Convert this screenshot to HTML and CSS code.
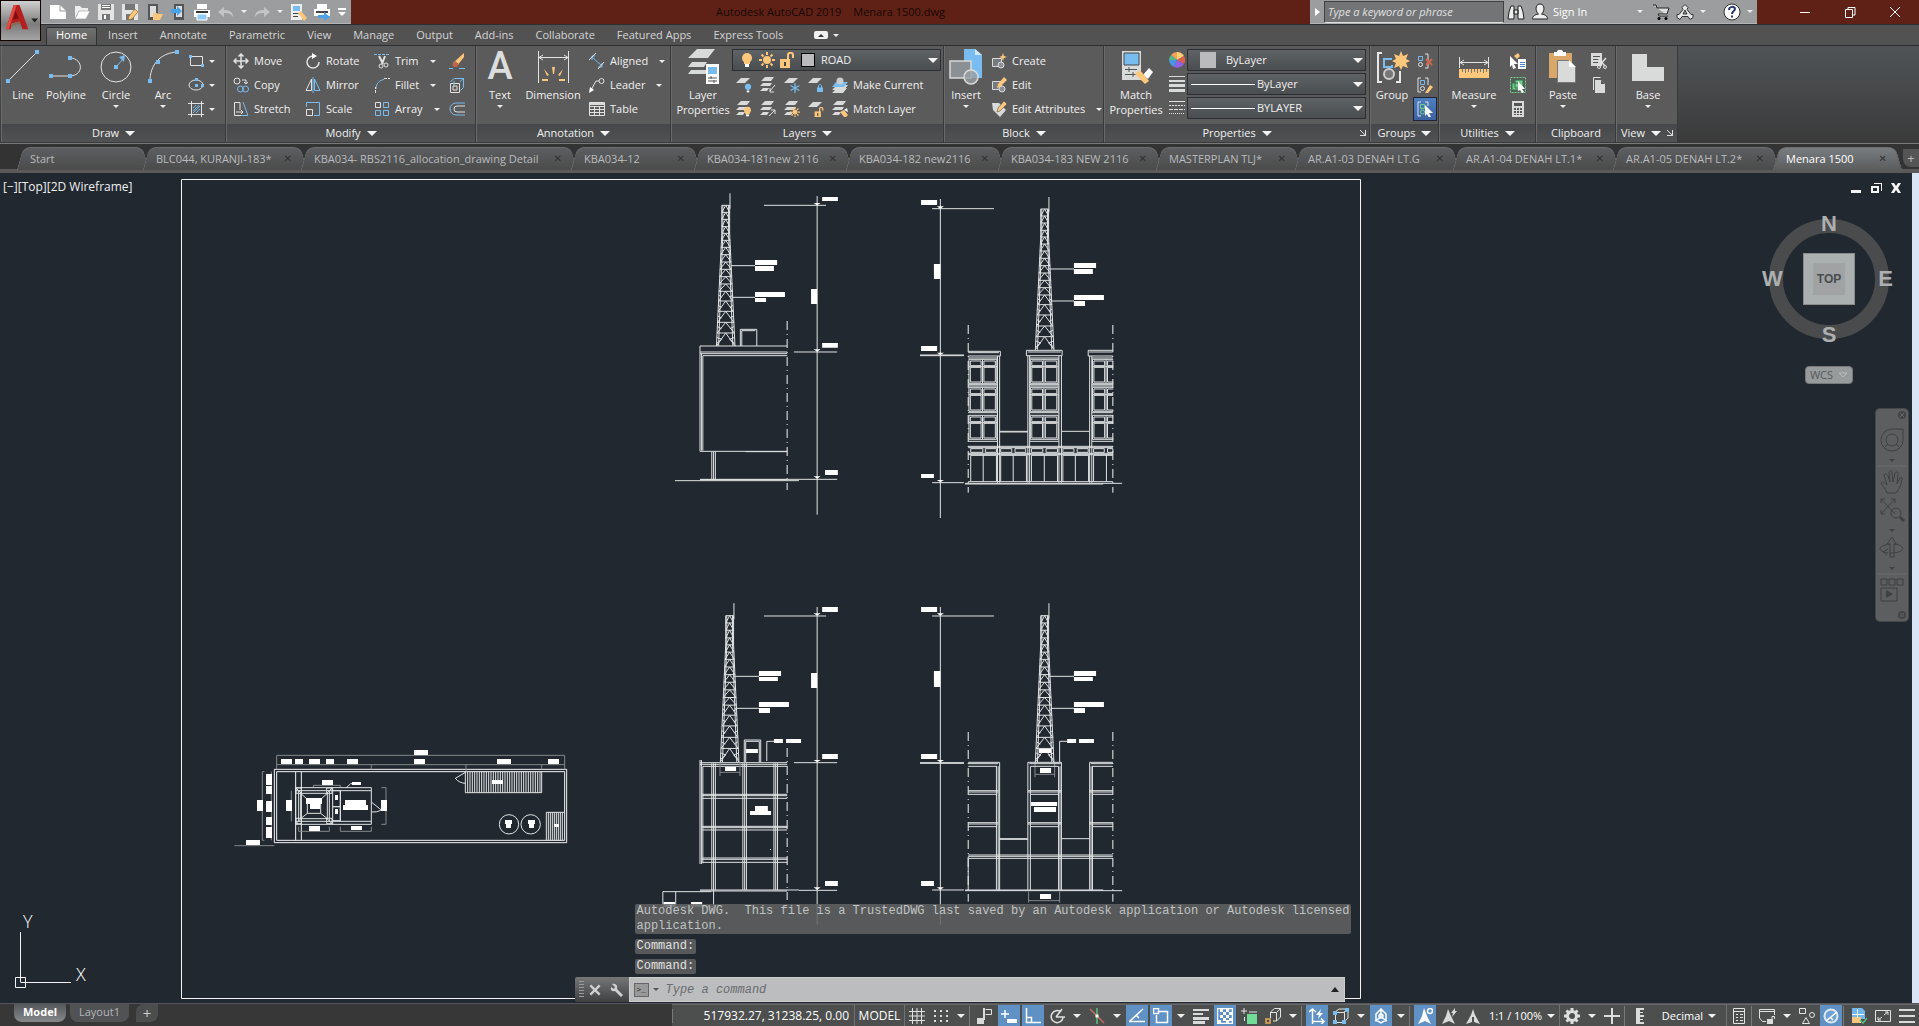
FILE: index.html
```html
<!DOCTYPE html>
<html lang="en">
<head>
<meta charset="utf-8">
<title>Autodesk AutoCAD 2019 - Menara 1500.dwg</title>
<link rel="stylesheet" href="styles.css">
</head>
<body>
<svg class="defs" aria-hidden="true">
  <defs>
    <!-- 16px icons: w = light stroke, b = blue stroke, fills use f-* -->
    <symbol id="new" viewBox="0 0 18 18"><path class="f-white" d="M1 2h10l6 6v8H1z"/><path d="M11 2v6h6" stroke="#999" fill="none"/></symbol>
    <symbol id="open" viewBox="0 0 18 18"><path d="M2 15V3h5l2 2h6v3H6z" fill="#eee"/><path class="f-white" d="M6 8h11l-4 8H2z" stroke="#999" stroke-width=".6"/></symbol>
    <symbol id="save" viewBox="0 0 18 18"><path fill="#e4e4e4" d="M1 1h16v16H1z"/><path fill="#777" d="M4 1h10v6H4zM5 11h8v6H5z"/><path fill="#fff" d="M5 2h8v1H5zM5 4h8v1H5zM7 12h2v4H7z"/></symbol>
    <symbol id="saveas" viewBox="0 0 18 18"><path fill="#e4e4e4" d="M1 1h16v16H1z"/><path fill="#777" d="M4 1h10v6H4zM5 11h8v6H5z"/><path fill="#fdc77b" d="M14 6l3 3-6 7-4 1 1-4z" stroke="#7a5a30" stroke-width=".6"/></symbol>
    <symbol id="openweb" viewBox="0 0 18 18"><path fill="#555" d="M3 1h10v16H3z"/><path fill="#ddd" d="M5 3h6v11H5z"/><path fill="#fdc77b" d="M8 10h4l1 1h5l-3 6H8z"/></symbol>
    <symbol id="saveweb" viewBox="0 0 18 18"><path fill="#555" d="M5 1h10v16H5z"/><path fill="#ddd" d="M7 3h6v11H7z"/><path fill="#4aa3e8" d="M2 6h6V3l5 5-5 5v-3H2z"/></symbol>
    <symbol id="plot" viewBox="0 0 18 18"><path class="f-white" d="M4 1h10v5H4zM1 7h16v7H1z"/><path fill="#333" d="M3 8h12v2H3z"/><path fill="#8ecbf5" d="M4 11h10v6H4z" stroke="#fff"/></symbol>
    <symbol id="undo" viewBox="0 0 18 18"><path fill="#c4c4c4" d="M1 9l6-5v3c6 0 9 2 9 7-2-3-4-4-9-4v4z"/></symbol>
    <symbol id="redo" viewBox="0 0 18 18"><path fill="#c4c4c4" d="M17 9l-6-5v3c-6 0-9 2-9 7 2-3 4-4 9-4v4z"/></symbol>
    <symbol id="matchprop" viewBox="0 0 18 18"><path fill="#eee" d="M2 1h11v16H2z"/><path fill="#79bdf0" d="M4 3h7v5H4z"/><path stroke="#444" d="M4 10.500h6M4 13.500h5"/><path fill="#fdc77b" d="M9 10l3-2 6 7-3 3z"/></symbol>
    <symbol id="batch" viewBox="0 0 18 18"><path class="f-white" d="M4 1h10v5H4zM1 6h16v7H1z"/><path fill="#444" d="M3 8h12v2H3z"/><path fill="#4aa3e8" d="M5 12h6V9l6 5-6 4v-3H5z"/></symbol>
    <symbol id="bino" viewBox="0 0 18 18"><path fill="#eee" stroke="#222" d="M2 9l2-6h3v13H1zM16 9l-2-6h-3v13h6zM7 7h4v4H7z"/></symbol>
    <symbol id="person" viewBox="0 0 18 18"><path fill="#eee" stroke="#222" d="M9 1c6 0 4 9 1.500 10 5 1 6 3 6 5h-15c0-2 1-4 6-5C5 10 3 1 9 1z"/></symbol>
    <symbol id="cart" viewBox="0 0 18 18"><path fill="#ddd" stroke="#222" d="M1 2h3l1 3h12l-2 6H6l1 2h9"/><circle cx="7" cy="15.500" r="1.500"/><circle cx="14" cy="15.500" r="1.500"/></symbol>
    <symbol id="a360" viewBox="0 0 18 18"><path fill="#e8e8e8" stroke="#333" d="M9 1.500l3 3-1 2 4 5h2v3l-3 2-2-3H6l-2 3-3-2v-3h2l4-5-1-2zM9 7l-2 4h4z"/></symbol>
    <symbol id="help" viewBox="0 0 18 18"><circle cx="9" cy="9" r="8" fill="#fff" stroke="#333"/><path d="M6 7c0-4 6-4 6-1 0 2-3 2-3 5M9 12.500v2" fill="none" stroke="#24386c" stroke-width="2"/></symbol>

    <symbol id="line" viewBox="0 0 36 36"><path class="w" d="M3 32L32 3"/><path class="f-blue" d="M1 30h4v4H1zM30 1h4v4h-4z"/></symbol>
    <symbol id="polyline" viewBox="0 0 36 36"><path class="w" d="M4 27h17c16 0 14-18 1-18"/><path class="f-blue" d="M1 25h4v4H1zM20 25h4v4h-4zM20 7h4v4h-4z"/></symbol>
    <symbol id="circle" viewBox="0 0 36 36"><circle class="w" cx="18" cy="18" r="15"/><path class="b" d="M18 18l7-8"/><path class="f-blue" d="M16 16h4v4h-4zM27 6l-1 7-5-5z"/></symbol>
    <symbol id="arc" viewBox="0 0 36 36"><path class="w" d="M5 32C5 16 15 4 32 3"/><path class="f-blue" d="M3 30h4v4H3zM11 11h4v4h-4zM30 1h4v4h-4z"/></symbol>
    <symbol id="rect" viewBox="0 0 16 16"><path class="w" d="M2.500 3.500h12v9h-12z"/><path class="f-blue" d="M1 2h3v3H1zM13 11h3v3h-3z"/></symbol>
    <symbol id="ellipse" viewBox="0 0 16 16"><ellipse class="w" cx="8" cy="8" rx="7" ry="5"/><path class="f-blue" d="M7 7h3v3H7zM7 1h3v3H7zM13 7h3v3h-3z"/></symbol>
    <symbol id="hatch" viewBox="0 0 16 16"><path class="w" d="M3.500 0v16M13.500 0v16M0 2.500h16M0 13.500h16"/><path class="b" d="M5 7l3-3M5 10l6-6M5 12l7-7M8 12l4-4"/></symbol>
    <symbol id="move" viewBox="0 0 16 16"><path class="w" stroke-width="1.500" d="M8 1v14M1 8h14M5.500 3.500L8 1l2.500 2.500M5.500 12.500L8 15l2.500-2.500M3.500 5.500L1 8l2.500 2.500M12.500 5.500L15 8l-2.500 2.500"/></symbol>
    <symbol id="rotate" viewBox="0 0 16 16"><path class="w" stroke-width="1.500" d="M8 3a6 6 0 1 0 6 6"/><path class="f-white" d="M7 0l5 3-5 3z"/></symbol>
    <symbol id="trim" viewBox="0 0 16 16"><path class="b" stroke-dasharray="3 1" d="M0 1.500h15"/><path class="w" stroke-width="2" d="M5 3l4 8M11 3L8 11"/><circle class="w" cx="7" cy="13" r="2"/><circle class="w" cx="12" cy="12" r="2"/></symbol>
    <symbol id="copy" viewBox="0 0 16 16"><circle class="w" cx="4" cy="4" r="3"/><path class="w" d="M9 3h4v4M11 5l2 2 2-2"/><circle class="b" cx="7.500" cy="12" r="3"/><circle class="b" cx="12.500" cy="12" r="3"/></symbol>
    <symbol id="mirror" viewBox="0 0 16 16"><path class="w" d="M6.500 2v11.500H1z"/><path class="b" d="M9.500 2v11.500H15zM8 0v16"/></symbol>
    <symbol id="fillet" viewBox="0 0 16 16"><path class="b" d="M2 12C2 6 6 3 10 2.500"/><path class="w" stroke-dasharray="3 1" d="M10 1.500h6M1.500 16v-6"/></symbol>
    <symbol id="stretch" viewBox="0 0 16 16"><path class="w" d="M8 14.500H1.500V1.500H7V9"/><path class="b" d="M10 1l5 13.500H8"/><path class="w" d="M3 11h7M8 9l2 2-2 2"/></symbol>
    <symbol id="scale" viewBox="0 0 16 16"><path class="b" d="M1.500 6V1.500h13v13H9"/><path class="w" d="M1.500 8.500h6v6h-6z"/></symbol>
    <symbol id="array" viewBox="0 0 16 16"><path class="w" d="M1.500 1.500h5v5h-5z"/><path class="b" d="M9.500 1.500h5v5h-5zM1.500 9.500h5v5h-5zM9.500 9.500h5v5h-5z"/></symbol>
    <symbol id="erase" viewBox="0 0 16 16"><path class="f-gold" d="M15 0v4L8 13l-4-3z"/><path fill="#c0644a" d="M6 8l4 3-2 3H5l-2-2z"/><path class="b" d="M0 15.500h4M10 15.500h6"/></symbol>
    <symbol id="explode" viewBox="0 0 16 16"><path class="w" d="M1.500 6.500h9v9h-9z"/><path class="b" d="M1.500 4.500l4-3h9v9l-3 3M11 4.500l3.500-3M5 9V4"/><path class="w" d="M4 9h4v4H4z"/></symbol>
    <symbol id="offset" viewBox="0 0 16 16"><path class="b" d="M16 2H7a6 6 0 0 0 0 12h9"/><path class="w" d="M16 5H8a3 3 0 0 0 0 6h8"/></symbol>
    <symbol id="dim" viewBox="0 0 36 36"><path class="w" d="M3.500 2v32M33.500 2v32M4 8.500h29M8 6L4 8.500 8 11M29 6l4 2.500-4 2.500"/><path class="f-gold" d="M17 18h3l-1 7h-1zM9 20l5 6-2 1zM28 20l-5 6 2 1zM7 30h6v2H7zM24 30h6v2h-6z"/></symbol>
    <symbol id="aligned" viewBox="0 0 16 16"><path class="b" d="M3 4l10 9M3 7V3h3M13 10v4h-4"/><path class="w" d="M0 7l7-7M9 16l6-7"/></symbol>
    <symbol id="leader" viewBox="0 0 16 16"><circle class="w" cx="12.500" cy="4" r="2.500"/><path class="w" d="M10 4H7l-5 9"/><path class="f-white" d="M0 16l1-6 4 3z"/></symbol>
    <symbol id="table" viewBox="0 0 16 16"><path class="w" d="M.5 1.500h15v13H.5zM1 5.500h15M1 8.500h15M1 11.500h15M5.500 5v10M10.500 5v10"/><path class="f-grey" d="M1 2h14v2H1z"/></symbol>
    <symbol id="layers36" viewBox="0 0 36 36"><path class="f-grey" d="M12 0h18l-7 9H3zM3 13h19l-3 5H3l4-5zM3 21h18v4H3l3-4z"/><path class="f-white" d="M21 15h13v20H21z"/><path class="f-blue" d="M23 18h9v7h-9z"/><path d="M23 29h9M23 32h9M26 27v3M29 31v3" stroke="#555"/></symbol>
    <symbol id="lay" viewBox="0 0 16 16"><path class="f-grey" d="M5 1h9L9 6H0z"/></symbol>
    <symbol id="lays" viewBox="0 0 16 16"><path class="f-grey" d="M5 0h9l-3 4H1zM3 6h9l-2 3H0zM3 11h6l-2 3H0z"/></symbol>
    <symbol id="bulb" viewBox="0 0 16 16"><circle class="f-gold" cx="8" cy="6" r="5"/><path class="f-gold" d="M5 9h6v3H5z"/><path class="f-white" d="M6 12h4v3H6z"/></symbol>
    <symbol id="sun" viewBox="0 0 16 16"><circle class="f-gold" cx="8" cy="8" r="4"/><path stroke="#fdc77b" stroke-width="2" d="M8 0v3M8 13v3M0 8h3M13 8h3M2.500 2.500l2 2M11.500 11.500l2 2M2.500 13.500l2-2M11.500 4.500l2-2"/></symbol>
    <symbol id="unlock" viewBox="0 0 16 16"><path class="f-gold" d="M1 7h10v9H1z"/><path fill="none" stroke="#fdc77b" stroke-width="2" d="M9 8V3c0-3 5-3 5 0v3"/><path fill="#444" d="M5 10h2v4H5z"/></symbol>
    <symbol id="lock" viewBox="0 0 16 16"><path class="f-blue" d="M2 7h12v9H2z"/><path fill="none" stroke="#79bdf0" stroke-width="2" d="M5 8V4c0-4 6-4 6 0v4"/></symbol>
    <symbol id="flake" viewBox="0 0 16 16"><path stroke="#79bdf0" stroke-width="2" d="M8 0v16M1 4l14 8M15 4L1 12"/></symbol>
    <symbol id="bluebulb" viewBox="0 0 16 16"><circle class="f-blue" cx="8" cy="6" r="5"/><path class="f-white" d="M6 12h4v3H6z"/></symbol>
    <symbol id="l-off" viewBox="0 0 16 16"><use href="#lay"/><use href="#bluebulb" x="7" y="6" width="10" height="10"/></symbol>
    <symbol id="l-iso" viewBox="0 0 16 16"><use href="#lays"/><path class="w" d="M15 8l-5 6M10 11v4h4"/></symbol>
    <symbol id="l-frz" viewBox="0 0 16 16"><use href="#lay"/><use href="#flake" x="6" y="6" width="10" height="10"/></symbol>
    <symbol id="l-lck" viewBox="0 0 16 16"><use href="#lay"/><use href="#lock" x="8" y="6" width="8" height="10"/></symbol>
    <symbol id="l-cur" viewBox="0 0 16 16"><path class="f-grey" d="M5 8h11l-4 5H0zM5 11h10l-4 5H0z"/><path class="f-blue" d="M4 5h12l-4 5H0z"/><circle fill="#ccc" cx="8" cy="4" r="3.500"/></symbol>
    <symbol id="l-on" viewBox="0 0 16 16"><use href="#lays"/><use href="#bulb" x="6" y="5" width="11" height="11"/></symbol>
    <symbol id="l-uni" viewBox="0 0 16 16"><use href="#lays"/><path class="w" d="M9 15l6-6M11 9h4v4"/></symbol>
    <symbol id="l-thw" viewBox="0 0 16 16"><use href="#lays"/><use href="#sun" x="6" y="6" width="10" height="10"/></symbol>
    <symbol id="l-unl" viewBox="0 0 16 16"><use href="#lay"/><use href="#unlock" x="6" y="6" width="10" height="10"/></symbol>
    <symbol id="l-mat" viewBox="0 0 16 16"><use href="#lays"/><path class="f-gold" d="M8 11l4-2 4 5-3 3z"/><path class="f-white" d="M12 9l3-2 1 4z"/></symbol>
    <symbol id="insert36" viewBox="0 0 36 36"><path class="f-blue" d="M16 0h11l7 6v23H16z"/><path fill="#cfe8fa" d="M27 0v6h7z"/><path d="M2 12h21v17H2z" fill="#8b9094" stroke="#d8dada" stroke-width="1.500"/><circle cx="23" cy="28" r="7" fill="#99a0a4" fill-opacity=".8" stroke="#d8dada" stroke-width="1.500"/></symbol>
    <symbol id="create" viewBox="0 0 16 16"><path fill="#777b7e" stroke="#d8dada" d="M1.500 5.500h9v8h-9z"/><circle cx="10" cy="12" r="3" fill="#8b9094" stroke="#d8dada"/><path class="f-gold" d="M12 0l1 3 3 1-3 1-1 3-1-3-3-1 3-1z"/></symbol>
    <symbol id="edit" viewBox="0 0 16 16"><path fill="#777b7e" stroke="#d8dada" d="M1.500 4.500h9v8h-9z"/><circle cx="11" cy="12" r="3" fill="#8b9094" stroke="#d8dada"/><path class="f-gold" d="M13 0l3 3-7 7-3 1 1-4z"/></symbol>
    <symbol id="editattr" viewBox="0 0 16 16"><path class="f-grey" d="M1 2h7l7 7-6 7-7-7z"/><path class="f-gold" d="M13 0l3 3-7 7-3 1 1-4z" stroke="#555" stroke-width=".6"/></symbol>
    <symbol id="match36" viewBox="0 0 36 36"><path class="f-grey" d="M4 2h19v29H4z"/><path class="f-blue" d="M6 4h15v12H6z" stroke="#444"/><path d="M7 20.500h12M7 25.500h12M11 18v5M15 23v5" stroke="#555"/><path class="f-white" d="M25 26l6-7 4 4-5 7z"/><path class="f-gold" d="M17 25l5-4 9 11-4 3z"/></symbol>
    <symbol id="wheel" viewBox="0 0 16 16"><path fill="#f2a25c" d="M8 8L2 3a8 8 0 0 1 6-3z"/><path fill="#f9cf72" d="M8 8V0a8 8 0 0 1 7 4z"/><path fill="#d9604a" d="M8 8l7-4a8 8 0 0 1 0 8z"/><path fill="#9460e8" d="M8 8l7 4a8 8 0 0 1-10 3z"/><path fill="#4a94e0" d="M8 8l-3 7a8 8 0 0 1-5-7z"/><path fill="#53b98b" d="M8 8H0a8 8 0 0 1 2-5z"/></symbol>
    <symbol id="lweight" viewBox="0 0 16 16"><path class="f-grey" d="M0 0h16v1H0zM0 4h16v2H0zM0 8h16v3H0zM0 13h16v3H0z"/></symbol>
    <symbol id="ltype" viewBox="0 0 16 16"><path class="w" d="M0 1.500h16"/><path class="w" stroke-dasharray="2 1" d="M0 5.500h16"/><path class="w" stroke-dasharray="4 1" d="M0 9.500h16"/><path class="w" stroke-dasharray="1 1" d="M0 13.500h16"/></symbol>
    <symbol id="group36" viewBox="0 0 36 36"><path fill="none" stroke="#e8e8e8" stroke-width="2" d="M8 4H4v29h4M22 33h4V22"/><path fill="none" stroke="#79bdf0" stroke-width="2" d="M18 10H10v8h8v-2"/><circle cx="15" cy="25" r="5" fill="#777" stroke="#ccc" stroke-width="2"/><path class="f-gold" d="M27 2l2 5 5-2-2 5 4 2-4 2 2 5-5-2-2 4-2-4-5 2 2-5-4-2 4-2-2-5 5 2z"/></symbol>
    <symbol id="ungroup" viewBox="0 0 16 16"><path class="w" d="M8 1h3v14H8"/><path class="b" d="M1.500 3.500h4v4h-4z"/><circle class="w" cx="3.500" cy="11.500" r="2"/><path stroke="#d0674c" stroke-width="2" d="M9 6l6 6M15 6l-6 6"/></symbol>
    <symbol id="groupedit" viewBox="0 0 16 16"><path class="w" d="M4 1H1v14h3M8 1h3v7"/><path class="b" d="M3.500 3.500h4v4h-4z"/><circle class="w" cx="5.500" cy="11.500" r="2"/><path class="f-gold" d="M13 8l3 2-5 6H8z"/></symbol>
    <symbol id="groupsel" viewBox="0 0 16 16"><path class="w" d="M4 1H1v14h3M8 1h3v4"/><path fill="none" stroke="#6fd08c" d="M3.500 3.500h4v4h-4z"/><circle cx="5.500" cy="11" r="2" fill="none" stroke="#6fd08c"/><path class="f-white" d="M8 4l8 8h-4l2 4-2 1-2-4-2 2z"/></symbol>
    <symbol id="measure36" viewBox="0 0 36 36"><path class="w" d="M3.500 8v11M32.500 8v11M4 13.500h28M8 11l-4 2.500L8 16M28 11l4 2.500L28 16"/><path class="f-gold" d="M3 20h30v9H3z"/><path stroke="#777" d="M6.500 20v3M9.500 20v4M12.500 20v3M15.500 20v4M18.500 20v3M21.500 20v4M24.500 20v3M27.500 20v4M30.500 20v3"/></symbol>
    <symbol id="qsel" viewBox="0 0 16 16"><path class="f-white" d="M0 3l8 8H4l2 4-3 1-1-4-2 2zM8 6h8v10H8z"/><path class="f-gold" d="M8 0l2 3-3 3-3-3z"/><path stroke="#4a86c8" d="M10 9.500h5M10 11.500h5M10 13.500h5"/></symbol>
    <symbol id="selall" viewBox="0 0 16 16"><path fill="none" stroke="#6fd08c" stroke-dasharray="2 1" d="M.5.5h15v15H.5z"/><path fill="#6fd08c" d="M5 3h8v8H5zM2 6h8v7H2z" stroke="#3f6b4c"/><path class="f-white" d="M8 4l7 8h-3l2 3-2 1-2-3-2 1z"/></symbol>
    <symbol id="calc" viewBox="0 0 16 16"><path class="f-grey" d="M2 0h12v16H2z"/><path fill="#555" d="M4 2h8v3H4zM4 7h2v2H4zM7 7h2v2H7zM10 7h2v2h-2zM4 10h2v2H4zM7 10h2v2H7zM10 10h2v2h-2zM4 13h2v1H4zM7 13h2v1H7zM10 13h2v1h-2z"/></symbol>
    <symbol id="paste36" viewBox="0 0 36 36"><path fill="#dba669" d="M4 4h23v25H4z"/><path class="f-white" d="M9 7h12V3h-3c0-3-6-3-6 0H9z"/><path class="f-grey" stroke="#777" d="M12.500 11.500h11l7 7v15h-18z"/><path fill="#fff" d="M24 11v7h7z"/></symbol>
    <symbol id="cut" viewBox="0 0 16 16"><path class="f-grey" d="M0 0h11v13H0z"/><path stroke="#555" d="M2 3.500h7M2 6.500h7M2 9.500h5"/><path class="w" stroke-width="1.500" d="M7 5l7 8M15 5l-7 8"/><circle class="w" cx="8" cy="14" r="1.500"/><circle class="w" cx="14" cy="14" r="1.500"/></symbol>
    <symbol id="copyclip" viewBox="0 0 16 16"><path class="w" d="M2.500 13V.5h7"/><path class="f-grey" d="M4 3h6l4 4v9H4z"/><path fill="#555" d="M10 3v4h4z"/></symbol>
    <symbol id="base36" viewBox="0 0 36 36"><path class="f-grey" d="M2 5h15v13h17v14H2z"/></symbol>

    <symbol id="s-grid" viewBox="0 0 16 16"><path class="w" d="M3.500 0v16M8 0v16M12.500 0v16M0 3.500h16M0 8h16M0 12.500h16"/></symbol>
    <symbol id="s-snap" viewBox="0 0 16 16"><path stroke="#ddd" stroke-width="2" stroke-dasharray="2 4" d="M1 3h14M1 8h14M1 13h14"/></symbol>
    <symbol id="s-infer" viewBox="0 0 16 16"><path class="f-grey" d="M0 10h7v6H0zM6 0h2v12H6z"/><path class="w" d="M8.500 1.500h6v5h-6"/></symbol>
    <symbol id="s-dyn" viewBox="0 0 16 16"><path stroke="#fff" stroke-width="1.500" d="M4 2v8M0 6h8"/><path class="f-white" d="M6 11h10v4H6z"/></symbol>
    <symbol id="s-ortho" viewBox="0 0 16 16"><path class="ww" d="M1.500 0v14.500H16M2 9.500h4.500V14"/></symbol>
    <symbol id="s-polar" viewBox="0 0 16 16"><path class="w" stroke-width="1.500" d="M12 4a6 6 0 1 0 2 6M7 9h9M7 9l6-8"/></symbol>
    <symbol id="s-iso" viewBox="0 0 16 16"><path stroke="#59c07a" stroke-width="1.500" d="M8 0v16"/><path stroke="#c07060" stroke-width="1.500" d="M1 1l14 14"/><path class="f-white" d="M6.500 6.500h3v3h-3z"/></symbol>
    <symbol id="s-otrack" viewBox="0 0 16 16"><path class="ww" d="M0 13.500h16M1 13L14 1M7 7l3 3"/></symbol>
    <symbol id="s-osnap" viewBox="0 0 16 16"><path class="ww" d="M6 3.500h8.500v11H3.500V7M.5.5h5v5h-5z"/></symbol>
    <symbol id="s-lwt" viewBox="0 0 16 16"><path class="f-grey" d="M0 1h16v2H0zM0 5h10v2H0zM0 9h16v3H0zM0 13h12v3H0z"/></symbol>
    <symbol id="s-trans" viewBox="0 0 16 16"><path class="ww" d="M.5.5h15v15H.5z"/><path class="f-white" d="M3 1h3v3H3zM9 1h3v3H9zM6 4h3v3H6zM12 4h3v3h-3zM3 7h3v3H3zM9 7h3v3H9zM6 10h3v3H6zM12 10h3v3h-3zM1 12h3v3H1zM9 12h3v3H9z"/></symbol>
    <symbol id="s-cycle" viewBox="0 0 16 16"><path class="w" d="M3 0v6M0 3h6M3.500 9V13M8 4h8"/><path fill="#71dc95" d="M6 6h10v10H6z"/></symbol>
    <symbol id="s-cube" viewBox="0 0 16 16"><path class="w" d="M5.500 10V4l4-3.500h6V9l-4 4H8M5.500 4.500h6V13M11.500 4.500l4-4"/><path fill="none" stroke="#e8a85c" stroke-width="1.500" d="M1 11h4v4H1z"/></symbol>
    <symbol id="s-ucs" viewBox="0 0 16 16"><path class="ww" d="M3.500 16V1M0 4l3.500-3L7 4M3 13.500h12M12 10.500l3 3-3 3"/><path class="f-white" d="M12 1L7 7h3l-1 4 5-6h-3z"/></symbol>
    <symbol id="s-filt" viewBox="0 0 16 16"><path class="w" d="M2.500 4.500h9v10h-9zM2 4l4-3h9v9l-4 4M11 4l4-3"/><path class="f-blue" d="M0 3h4v4H0zM0 12h4v4H0zM9 12h4v4H9zM12 0h4v4h-4z"/></symbol>
    <symbol id="s-gizmo" viewBox="0 0 16 16"><path class="ww" d="M8 1l5 5v6l-5 3-5-3V6zM8 1v8M8 9l-6 4M8 9l6 4"/><circle class="ww" cx="8" cy="8" r="2"/></symbol>
    <symbol id="s-anno" viewBox="0 0 16 16"><path class="f-white" d="M7 0l3 8 4 8-6-3-7 3 4-8z"/><circle class="ww" cx="13" cy="3" r="2.500"/></symbol>
    <symbol id="s-auto" viewBox="0 0 16 16"><path class="f-grey" d="M7 1l3 7 4 8-6-3-7 3 4-8zM14 0l-4 5h2l-1 4 5-6h-2z"/></symbol>
    <symbol id="s-scale" viewBox="0 0 16 16"><path class="f-grey" d="M8 1l2 6 5 9-6-2V9H7v5l-6 2 5-9z"/></symbol>
    <symbol id="s-gear" viewBox="0 0 16 16"><circle cx="8" cy="8" r="4.500" fill="none" stroke="#ddd" stroke-width="3"/><path stroke="#ddd" stroke-width="3" d="M8 0v3M8 13v3M0 8h3M13 8h3M2.500 2.500l2 2M11.500 11.500l2 2M2.500 13.500l2-2M11.500 4.500l2-2"/></symbol>
    <symbol id="s-plus" viewBox="0 0 16 16"><path stroke="#ddd" stroke-width="2" d="M8 0v16M0 8h16"/></symbol>
    <symbol id="s-ruler" viewBox="0 0 16 16"><path class="f-grey" d="M4 0h8v2H8v2h3v1H8v2h4v2H8v2h3v1H8v2h4v2H4z"/></symbol>
    <symbol id="s-quick" viewBox="0 0 16 16"><path class="w" d="M2.500.5h11v15h-11zM3 3.500h10M5 6.500h2M9 6.500h3M5 9.500h2M9 9.500h3M5 12.500h2M9 12.500h3"/></symbol>
    <symbol id="s-lockui" viewBox="0 0 16 16"><path class="w" d="M7 13.500H3.500L.5 10V1.500h15V7M.5 3.500h15"/><path class="f-grey" d="M8 11h6v5H8z"/><path class="w" d="M13 11V8.500h2.500V11"/></symbol>
    <symbol id="s-isol" viewBox="0 0 16 16"><path class="w" d="M.5.500h6v5h-6zM7 9.500l3.500 6h-7z"/><circle class="w" cx="13" cy="7" r="2.500"/></symbol>
    <symbol id="s-hw" viewBox="0 0 16 16"><circle cx="8" cy="8" r="7.500" fill="#dfe8f0"/><circle cx="8" cy="8" r="5.500" fill="#6da2d4"/><path stroke="#fff" stroke-width="1.500" d="M3 13L14 4M7 9l3 3"/></symbol>
    <symbol id="s-cad" viewBox="0 0 16 16"><path fill="#6fb8f0" d="M1 0h10l3 3v8H1z"/><path fill="#f5c77e" d="M1 9h9v6H1z"/><path stroke="#fff" d="M1 6.500h12M6.500 1v9"/><path fill="none" stroke="#59c07a" stroke-width="1.500" d="M9 12l3 3 4-5"/></symbol>
    <symbol id="s-full" viewBox="0 0 16 16"><path class="w" d="M.5 2.500h15v11H.5zM9 7l4-3M10 4h3v3M7 9l-4 3M3 9v3h3"/></symbol>
    <symbol id="s-menu" viewBox="0 0 16 16"><path class="f-grey" d="M0 1h16v2H0zM0 7h16v2H0zM0 13h16v2H0z"/></symbol>

    <!-- Lattice tower, centred on x = 0, in drawing units -->
    <g id="tower">
      <path d="M-11 76V160L-26 498M11 76V160L26 498M-8 76V160L-20 498M8 76V160L20 498M-11 76H11M12 40V86"/>
      <path d="M-11 97L0 76L11 97ZM-11 118L0 97L11 118ZM-11 140L0 118L11 140ZM-11 160L0 140L11 160ZM-12 181L0 160L12 181ZM-13 202L0 181L13 202ZM-14 224L0 202L14 224ZM-15 246L0 224L15 246ZM-16 268L0 246L16 268ZM-17 290L0 268L17 290ZM-18 312L0 290L18 312ZM-19 334L0 312L19 334ZM-20 363L0 334L20 363ZM-21 394L0 363L21 394ZM-23 427L0 394L23 427ZM-24 459L0 427L24 459ZM-26 498L0 459L26 498"/>
      <path d="M-20 345l8 6M20 345l-8 6M-21 376l9 6M21 376l-9 6M-22 408l10 6M22 408l-10 6M-23 440l11 6M23 440l-11 6M-25 472l14 6-14 12M25 472l-14 6 14 12"/>
    </g>
    <g id="win"><path d="M0 0H78V72H0ZM4 5H34V19H4ZM42 5H74V19H42ZM4 24H34V68H4ZM42 24H74V68H42ZM38 0V72M0 22H78"/></g>
    <g id="winhalf"><path d="M58 0H0V72H58M4 5H34V19H4ZM58 5H42V19H58M4 24H34V68H4ZM58 24H42V68H58M38 0V72M0 22H58"/></g>
    <g id="mark"><path class="solid" d="M-10 -7H10L0 0Z"/></g>
  </defs>
</svg>

<div class="app">
<header class="titlebar">
  <button class="app-menu" aria-label="Application menu">
    <svg viewBox="0 0 40 40"><path fill="#b3201f" d="M5 29L13 4h6l9 25h-6l-3-8-8 2-1 6z"/><path fill="#e44a42" d="M13 4h3L8 29H5z"/><path fill="#7d0f12" d="M15 10l-3 9 6-1z"/><path fill="#8a6a50" d="M11 23l8-2 1 2-10 3z"/><path fill="#222" d="M31 18h7l-3.500 4z"/></svg>
  </button>
  <div class="qat">
    <button aria-label="New"><svg><use href="#new"/></svg></button>
    <button aria-label="Open"><svg><use href="#open"/></svg></button>
    <button aria-label="Save"><svg><use href="#save"/></svg></button>
    <button aria-label="Save As"><svg><use href="#saveas"/></svg></button>
    <button aria-label="Open from Web"><svg><use href="#openweb"/></svg></button>
    <button aria-label="Save to Web"><svg><use href="#saveweb"/></svg></button>
    <button aria-label="Plot"><svg><use href="#plot"/></svg></button>
    <button aria-label="Undo"><svg><use href="#undo"/></svg></button>
    <button class="arrow" aria-label="Undo list"></button>
    <button aria-label="Redo"><svg><use href="#redo"/></svg></button>
    <button class="arrow" aria-label="Redo list"></button>
    <button aria-label="Match"><svg><use href="#matchprop"/></svg></button>
    <button aria-label="Batch plot"><svg><use href="#batch"/></svg></button>
    <button class="over" aria-label="Customize"></button>
  </div>
  <h1 class="title"><span>Autodesk AutoCAD 2019</span><span>Menara 1500.dwg</span></h1>
  <div class="infobar">
    <button class="right-arrow" aria-label="Collapse search"></button>
    <input type="text" placeholder="Type a keyword or phrase" aria-label="Search">
    <button class="ib" aria-label="Find"><svg><use href="#bino"/></svg></button>
    <button class="signin"><svg><use href="#person"/></svg>Sign In</button>
    <button class="arrow" aria-label="Account list"></button>
    <button class="ib cart" aria-label="Store"><svg><use href="#cart"/></svg></button>
    <button class="ib" aria-label="App manager"><svg><use href="#a360"/></svg></button>
    <button class="arrow" aria-label="App list"></button>
    <button class="ib help" aria-label="Help"><svg><use href="#help"/></svg></button>
    <button class="arrow" aria-label="Help list"></button>
  </div>
  <div class="winbtns">
    <button aria-label="Minimize"><svg viewBox="0 0 12 12"><path d="M1 6.500h10"/></svg></button>
    <button aria-label="Restore"><svg viewBox="0 0 12 12"><path d="M1.500 3.500h7v8h-7zM4 3V1.500h7V9H9"/></svg></button>
    <button aria-label="Close"><svg viewBox="0 0 12 12"><path d="M1 1l10 10M11 1L1 11"/></svg></button>
  </div>
</header>

<nav class="ribbon-tabs">
  <a href="#" class="active">Home</a><a href="#">Insert</a><a href="#">Annotate</a><a href="#">Parametric</a><a href="#">View</a><a href="#">Manage</a><a href="#">Output</a><a href="#">Add-ins</a><a href="#">Collaborate</a><a href="#">Featured Apps</a><a href="#">Express Tools</a>
  <button class="min-ribbon" aria-label="Minimize ribbon"></button><button class="arrow" aria-label="Ribbon options"></button>
</nav>

<section class="ribbon">
  <div class="panel p-draw">
    <div class="body">
      <button class="big w38"><svg><use href="#line"/></svg>Line</button>
      <button class="big w48"><svg><use href="#polyline"/></svg>Polyline</button>
      <button class="big w52"><svg><use href="#circle"/></svg>Circle<i class="dn"></i></button>
      <button class="big w42"><svg><use href="#arc"/></svg>Arc<i class="dn"></i></button>
      <div class="col">
        <button aria-label="Rectangle"><svg><use href="#rect"/></svg><i class="dn"></i></button>
        <button aria-label="Ellipse"><svg><use href="#ellipse"/></svg><i class="dn"></i></button>
        <button aria-label="Hatch"><svg><use href="#hatch"/></svg><i class="dn"></i></button>
      </div>
    </div>
    <div class="ptitle">Draw<i class="tri"></i></div>
  </div>
  <div class="panel p-modify">
    <div class="body">
      <div class="col w72">
        <button><svg><use href="#move"/></svg>Move</button>
        <button><svg><use href="#copy"/></svg>Copy</button>
        <button><svg><use href="#stretch"/></svg>Stretch</button>
      </div>
      <div class="col w69">
        <button><svg><use href="#rotate"/></svg>Rotate</button>
        <button><svg><use href="#mirror"/></svg>Mirror</button>
        <button><svg><use href="#scale"/></svg>Scale</button>
      </div>
      <div class="col w75">
        <button><svg><use href="#trim"/></svg>Trim<i class="dn"></i></button>
        <button><svg><use href="#fillet"/></svg>Fillet<i class="dn"></i></button>
        <button><svg><use href="#array"/></svg>Array<i class="dn"></i></button>
      </div>
      <div class="col">
        <button aria-label="Erase"><svg><use href="#erase"/></svg></button>
        <button aria-label="Explode"><svg><use href="#explode"/></svg></button>
        <button aria-label="Offset"><svg><use href="#offset"/></svg></button>
      </div>
    </div>
    <div class="ptitle">Modify<i class="tri"></i></div>
  </div>
  <div class="panel p-anno">
    <div class="body">
      <button class="big w42"><span class="bigA" aria-hidden="true">A</span>Text<i class="dn"></i></button>
      <button class="big w64"><svg><use href="#dim"/></svg>Dimension</button>
      <div class="col">
        <button><svg><use href="#aligned"/></svg>Aligned<i class="dn"></i></button>
        <button><svg><use href="#leader"/></svg>Leader<i class="dn"></i></button>
        <button><svg><use href="#table"/></svg>Table</button>
      </div>
    </div>
    <div class="ptitle">Annotation<i class="tri"></i></div>
  </div>
  <div class="panel p-layers">
    <div class="body">
      <button class="big w58"><svg><use href="#layers36"/></svg>Layer Properties</button>
      <div class="stack">
        <button class="combo layer"><svg><use href="#bulb"/></svg><svg><use href="#sun"/></svg><svg><use href="#unlock"/></svg><i class="sw outlined"></i><span>ROAD</span><i class="tri"></i></button>
        <div class="row">
          <button aria-label="Off"><svg><use href="#l-off"/></svg></button>
          <button aria-label="Isolate"><svg><use href="#l-iso"/></svg></button>
          <button aria-label="Freeze"><svg><use href="#l-frz"/></svg></button>
          <button aria-label="Lock"><svg><use href="#l-lck"/></svg></button>
          <button><svg><use href="#l-cur"/></svg>Make Current</button>
        </div>
        <div class="row">
          <button aria-label="Turn all on"><svg><use href="#l-on"/></svg></button>
          <button aria-label="Unisolate"><svg><use href="#l-uni"/></svg></button>
          <button aria-label="Thaw all"><svg><use href="#l-thw"/></svg></button>
          <button aria-label="Unlock"><svg><use href="#l-unl"/></svg></button>
          <button><svg><use href="#l-mat"/></svg>Match Layer</button>
        </div>
      </div>
    </div>
    <div class="ptitle">Layers<i class="tri"></i></div>
  </div>
  <div class="panel p-block">
    <div class="body">
      <button class="big w42"><svg><use href="#insert36"/></svg>Insert<i class="dn"></i></button>
      <div class="col">
        <button><svg><use href="#create"/></svg>Create</button>
        <button><svg><use href="#edit"/></svg>Edit</button>
        <button><svg><use href="#editattr"/></svg>Edit Attributes<i class="dn"></i></button>
      </div>
    </div>
    <div class="ptitle">Block<i class="tri"></i></div>
  </div>
  <div class="panel p-props">
    <div class="body">
      <button class="big w58"><svg><use href="#match36"/></svg>Match Properties</button>
      <div class="stack">
        <div class="prow"><svg><use href="#wheel"/></svg><button class="combo color"><i class="sw"></i><span>ByLayer</span><i class="tri"></i></button></div>
        <div class="prow"><svg><use href="#lweight"/></svg><button class="combo"><i class="rule"></i><span>ByLayer</span><i class="tri"></i></button></div>
        <div class="prow"><svg><use href="#ltype"/></svg><button class="combo"><i class="rule"></i><span>BYLAYER</span><i class="tri"></i></button></div>
      </div>
    </div>
    <div class="ptitle">Properties<i class="tri"></i><i class="launch"></i></div>
  </div>
  <div class="panel p-groups">
    <div class="body">
      <button class="big w42"><svg><use href="#group36"/></svg>Group</button>
      <div class="col">
        <button aria-label="Ungroup"><svg><use href="#ungroup"/></svg></button>
        <button aria-label="Group edit"><svg><use href="#groupedit"/></svg></button>
        <button aria-label="Group selection" class="on"><svg><use href="#groupsel"/></svg></button>
      </div>
    </div>
    <div class="ptitle">Groups<i class="tri"></i></div>
  </div>
  <div class="panel p-utils">
    <div class="body">
      <button class="big w64"><svg><use href="#measure36"/></svg>Measure<i class="dn"></i></button>
      <div class="col">
        <button aria-label="Quick select"><svg><use href="#qsel"/></svg></button>
        <button aria-label="Select all"><svg><use href="#selall"/></svg></button>
        <button aria-label="Calculator"><svg><use href="#calc"/></svg></button>
      </div>
    </div>
    <div class="ptitle">Utilities<i class="tri"></i></div>
  </div>
  <div class="panel p-clip">
    <div class="body">
      <button class="big w48"><svg><use href="#paste36"/></svg>Paste<i class="dn"></i></button>
      <div class="col">
        <button aria-label="Cut"><svg><use href="#cut"/></svg></button>
        <button aria-label="Copy clip"><svg><use href="#copyclip"/></svg></button>
      </div>
    </div>
    <div class="ptitle">Clipboard</div>
  </div>
  <div class="panel p-view">
    <div class="body">
      <button class="big w58"><svg><use href="#base36"/></svg>Base<i class="dn"></i></button>
    </div>
    <div class="ptitle">View<i class="tri"></i><i class="launch"></i></div>
  </div>
</section>

<nav class="file-tabs">
  <a href="#" class="t-start">Start</a>
  <a href="#" class="t-l">BLC044, KURANJI-183*<i>✕</i></a>
  <a href="#" class="t-xl">KBA034- RBS2116_allocation_drawing Detail<i>✕</i></a>
  <a href="#" class="t-s">KBA034-12<i>✕</i></a>
  <a href="#" class="t-m">KBA034-181new 2116<i>✕</i></a>
  <a href="#" class="t-m">KBA034-182 new2116<i>✕</i></a>
  <a href="#" class="t-l">KBA034-183 NEW 2116<i>✕</i></a>
  <a href="#" class="t-n">MASTERPLAN TLJ*<i>✕</i></a>
  <a href="#" class="t-l">AR.A1-03 DENAH LT.G<i>✕</i></a>
  <a href="#" class="t-w">AR.A1-04 DENAH LT.1*<i>✕</i></a>
  <a href="#" class="t-w">AR.A1-05 DENAH LT.2*<i>✕</i></a>
  <a href="#" class="t-s active">Menara 1500<i>✕</i></a>
  <button class="t-new" aria-label="New drawing">+</button>
</nav>

<main class="canvas">
  <svg class="drawing" viewBox="0 173 1912 830" preserveAspectRatio="xMinYMin meet" role="img" aria-label="Tower elevations, sections and plan">
    <path class="ln bright" d="M181.500 179.500H1360.500V998.500H181.500Z"/>

    <!-- Elevations -->
    <g class="ln" transform="translate(640 180) scale(.35714 .33333)">
      <use href="#tower" x="240"/>
      <path d="M281 498V448H327V498M285 498V452H323M168 498H412M168 516H412M168 521H412M176 527H412M168 498V814M172 520V812M176 527V812M168 814H412M201 815V898M206 815V898M211 815V898M98 902H445M168 898H552M296 815H412M168 899H412"/>
      <path class="chain" d="M412 423V930"/>
      <path d="M496 48V1004M347 76H521M431 516H552M255 257H322M258 352H322"/>
      <use href="#mark" x="496" y="76"/><use href="#mark" x="496" y="515"/><use href="#mark" x="496" y="896"/>
      <path class="solid" d="M510 51H554V63H510ZM510 489H554V503H510ZM518 870H554V885H518ZM479 327H496V372H479ZM322 240H384V255H322ZM322 258H375V273H322ZM322 336H406V351H322ZM322 354H353V366H322Z"/>

      <use href="#tower" x="1133" y="11"/>
      <path d="M841 57V1014M818 86H991M784 525H907M784 527H907M818 908H907M1145 267H1215M1150 363H1215"/>
      <use href="#mark" x="841" y="86"/><use href="#mark" x="841" y="525"/><use href="#mark" x="841" y="907"/>
      <path class="solid" d="M787 60H832V75H787ZM787 498H832V513H787ZM787 882H823V894H787ZM823 252H841V297H823ZM1215 249H1277V264H1215ZM1215 267H1268V282H1215ZM1215 345H1299V360H1215ZM1215 363H1246V378H1215Z"/>
      <path class="chain" d="M919 435V938M1324 435V938"/>
      <path d="M919 514H1009V528H919M919 518H1005M1082 511H1182V527H1082ZM1086 516H1178M1324 511H1255V528H1324M1258 516H1324"/>
      <path d="M1001 528V908M1007 528V908M1086 528V908M1091 528V908M1173 528V908M1180 528V908M1259 528V908M1265 528V908M1007 754H1086M1180 754H1259M1007 756H1086"/>
      <use href="#win" x="921" y="538"/><use href="#win" x="921" y="622"/><use href="#win" x="921" y="706"/>
      <use href="#win" x="1093" y="538"/><use href="#win" x="1093" y="622"/><use href="#win" x="1093" y="706"/>
      <use href="#winhalf" x="1267" y="538"/><use href="#winhalf" x="1267" y="622"/><use href="#winhalf" x="1267" y="706"/>
      <path d="M919 534H1000M919 614H1000M919 618H1000M919 698H1000M919 784H1000M1091 534H1173M1091 614H1173M1091 618H1173M1091 698H1173M1091 784H1173M1265 534H1324M1265 614H1324M1265 618H1324M1265 698H1324M1265 784H1324"/>
      <path d="M919 799H1324M919 803H1324M919 820H1324M919 824H1324M926 806H960V817H926ZM967 806H998V817H967ZM1010 806H1041V817H1010ZM1050 806H1080V817H1050ZM1096 806H1128V817H1096ZM1137 806H1169V817H1137ZM1184 806H1215V817H1184ZM1224 806H1255V817H1224ZM1270 806H1300V817H1270ZM1309 806H1324V817H1309Z"/>
      <path d="M926 905V826H998V905M961 826V905M1010 905V826H1082V905M1045 826V905M1096 905V826H1169V905M1132 826V905M1184 905V826H1256V905M1219 826V905M1270 905V826H1324M1306 826V905M919 905H1324M910 910H1350M910 912H1297"/>
    </g>

    <!-- Sections -->
    <g class="ln" transform="translate(640 590) scale(.35714 .33333)">
      <g transform="translate(0 -2) scale(1 1.04)"><use href="#tower" x="251"/><use href="#tower" x="1133"/></g>
      <path d="M292 516V450H338V516M296 516V454H334V516M355 513V454H375M168 518H412M168 523H412M176 529H412M168 510V822M172 510V822M176 529V820M174 613H412M174 617H412M174 625H412M174 709H412M174 713H412M174 720H412M174 804H412M174 808H412M174 817H412"/>
      <path d="M201 520V900M206 520V960M211 520V900M288 520V900M293 520V900M298 520V900M375 520V900M380 520V900M385 520V900M168 900H445M168 903H412M64 905H200M64 905V950M100 905V950M64 950H206M445 901H552"/>
      <path class="dim" d="M224 518V558M280 518V558M224 547H280M1106 518V562M1161 518V562M1106 553H1161M1088 905V938M1175 905V938M1088 932H1175"/>
      <path class="chain" d="M412 474V930M919 426V935M1324 426V935"/>
      <path d="M496 51V1004M347 78H521M431 518H552M262 259H333M266 355H333M841 51V1004M818 78H991M784 518H907M784 520H907M818 900H907M1145 259H1215M1150 355H1215M1175 516V454H1196"/>
      <use href="#mark" x="496" y="77"/><use href="#mark" x="496" y="517"/><use href="#mark" x="496" y="899"/>
      <use href="#mark" x="841" y="77"/><use href="#mark" x="841" y="517"/><use href="#mark" x="841" y="899"/>
      <path d="M919 517H1007V900M919 521H1003M919 529H1000M998 529V900M1003 529V900M1324 517H1259V900M1324 521H1262M1265 529H1324M1263 529V900M1267 529V900M1086 517H1180V900M1086 517V900M1090 521H1178M1093 529H1172M1093 529V900M1172 529V900M1176 529V900"/>
      <path d="M919 602H1003M919 606H1003M919 613H1000M1086 602H1180M1086 606H1180M1093 613H1172M1259 602H1324M1259 606H1324M1267 613H1324M919 698H1003M919 702H1003M919 710H1000M1086 698H1180M1086 702H1180M1093 710H1172M1259 698H1324M1259 702H1324M1267 710H1324M1007 746H1086M1007 748H1086M1180 746H1259M919 795H1324M919 799H1324M919 805H1324M919 800V900M910 902H1350M910 900H1297"/>
      <path class="solid" d="M510 51H554V66H510ZM510 492H554V507H510ZM518 873H554V888H518ZM479 249H496V294H479ZM333 243H395V258H333ZM333 261H386V273H333ZM333 336H417V351H333ZM333 354H364V369H333ZM375 447H400V459H375ZM409 447H451V459H409ZM297 477H330V489H297ZM238 531H269V543H238ZM322 648H358V663H322ZM308 663H367V675H308ZM66 936H98V948H66ZM143 936H174V948H143ZM364 777h3v3h-3z"/>
      <path class="solid" d="M787 51H832V66H787ZM787 492H832V507H787ZM787 873H823V888H787ZM823 243H841V291H823ZM1215 243H1277V258H1215ZM1215 261H1268V273H1215ZM1215 336H1299V351H1215ZM1215 354H1246V369H1215ZM1196 447H1221V459H1196ZM1229 447H1271V459H1229ZM1117 477H1151V489H1117ZM1120 534H1151V549H1120ZM1095 636H1168V648H1095ZM1103 651H1165V666H1103ZM1120 912H1151V927H1120Z"/>
    </g>

    <!-- Roof plan -->
    <g class="ln" transform="translate(220 730) scale(.33333)">
      <path class="bright" d="M163 118H1040V338H163ZM170 125H1034V331H170ZM227 125V331M244 125V331"/>
      <path class="dim" d="M170 118V76H1034V118M170 104H1034M454 104V118M738 104V125M965 104V118M127 125V331M154 125V331M214 182V274M280 173V166H361V173M236 290V304H328V290M361 290V304H454V290M498 173V283M484 173H498M484 283H498M43 347H163M127 125H133M127 331H133"/>
      <path d="M227 173H454V283H227ZM227 182H454M227 274H454M236 182V274M328 182V274M242 190H322V266H242ZM242 190L262 208H302L322 190M242 266L262 250H302L322 266M262 208V250M302 208V250M338 173V283M361 182V274M338 182H361V230H338M338 230H361V272H338M378 174L392 161H397M454 216L484 240Q470 248 456 246M228 174H244V190H228ZM320 174H336V190H320ZM228 265H244V281H228ZM320 265H336V281H320ZM228 174L244 190M320 190L336 174M228 281L244 265M320 265L336 281"/>
      <path d="M738 126L706 145Q718 160 738 160M736 125V188H965V125M743 125V188M750 125V188M757 125V188M764 125V188M771 125V188M778 125V188M785 125V188M792 125V188M799 125V188M806 125V188M813 125V188M820 125V188M827 125V188M834 125V188M841 125V188M848 125V188M855 125V188M862 125V188M869 125V188M876 125V188M883 125V188M890 125V188M897 125V188M904 125V188M911 125V188M918 125V188M925 125V188M932 125V188M939 125V188M946 125V188M953 125V188M960 125V188M979 331V247H1034M985 247V331M991 247V331M997 247V331M1003 247V331M1009 247V331M1015 247V331M1021 247V331M1027 247V331"/>
      <circle cx="867" cy="283" r="29"/><circle cx="932" cy="283" r="29"/>
      <path class="solid" d="M582 60H624V75H582ZM183 87H216V102H183ZM225 87H249V102H225ZM267 87H300V102H267ZM318 87H342V102H318ZM381 87H414V102H381ZM582 87H615V102H582ZM831 87H873V102H831ZM984 87H1017V102H984ZM306 150H339V165H306ZM396 156H423V165H396ZM138 132H156V165H138ZM138 168H156V192H138ZM138 213H156V246H138ZM138 261H156V285H138ZM138 291H156V324H138ZM111 210H129V243H111ZM198 210H216V243H198ZM483 210H501V243H483ZM258 204H306V222H300V237H270V222H258ZM375 210H438V225H444V240H369V225H375ZM345 195H354V210H345ZM345 237H354V252H345ZM267 288H300V303H267ZM393 288H426V300H393ZM78 330H120V345H78ZM816 150H849V162H816ZM855 270H876V282H873V294H858V282H855ZM924 270H945V282H942V294H927V282H924ZM1002 282H1017V291H1002Z"/>
    </g>

    <!-- UCS icon -->
    <path class="ln bright" d="M20.500 982V932M20.500 982.500H71M15.500 977.500h10v10h-10z"/>
    <text class="ucs" x="23" y="928">Y</text><text class="ucs" x="76" y="981">X</text>
  </svg>

  <div class="vp-label">[−][Top][2D Wireframe]</div>
  <div class="mdi">
    <button aria-label="Minimize drawing"><svg viewBox="0 0 12 12"><path d="M1 8h10v3H1z"/></svg></button>
    <button aria-label="Restore drawing"><svg viewBox="0 0 12 12"><path d="M1 4h8v7H1zM3 6v3h4V6zM4 1h8v8h-1V2H4z" fill-rule="evenodd"/></svg></button>
    <button aria-label="Close drawing"><svg viewBox="0 0 12 12"><path d="M1 1h3l2 3 2-3h3L8 6l3 5H8L6 8l-2 3H1l3-5z"/></svg></button>
  </div>

  <div class="cube">
    <span class="north">N</span><span class="west">W</span><button class="face"><b>TOP</b></button><span class="east">E</span><span class="south">S</span>
  </div>
  <button class="wcs">WCS<svg viewBox="0 0 10 6"><path d="M1 1h8L5 5z"/></svg></button>

  <div class="navbar">
    <svg viewBox="0 0 32 212" aria-hidden="true">
      <circle cx="26" cy="6" r="4" fill="#434445"/><path d="M24 4l4 4M28 4l-4 4" stroke="#666"/>
      <g fill="none" stroke="#3f4041"><path d="M16 20h11v11a11 11 0 1 1-11-11z"/><circle cx="16" cy="31" r="6"/><path d="M9 38l3-3M23 38l-3-3"/>
      <path d="M11 84C9 78 6 77 5 74c1-2 4 0 6 2L8 66c1-2 3-1 4 1l2 6-1-10c1-2 3-2 3 0l1 10 2-9c1-2 3-1 3 1l-1 10 3-6c2-1 3 0 2 2-1 6-3 9-6 13z"/>
      <path d="M5 90l14 15M19 90L5 105M5 94v-4h4M15 90h4v4M5 101v4h4"/><circle cx="20" cy="104" r="5"/><path stroke-width="3" d="M24 108l4 4"/>
      <path d="M14 148v-13h-3l5-7 4 7h-2v13zM14 135c-13 2-13 7-2 9M19 135c12 2 10 9-5 9M12 140l-5 3 4 3"/>
      <path d="M5 170h6v6H5zM13 170h6v6h-6zM21 170h6v6h-6zM5 179h16v13H5z"/></g>
      <path fill="#3f4041" d="M10 181l7 4-7 4zM13 50h6l-3 3zM13 120h6l-3 3zM13 158h6l-3 3z"/>
      <path stroke="#6c6d6e" d="M2 57h28M2 165h28"/>
      <circle cx="26" cy="206" r="4" fill="#434445"/><path d="M24 205h4M24 207h4" stroke="#666"/>
    </svg>
  </div>

  <div class="command">
    <div class="history">
      <p>Autodesk DWG.&nbsp; This file is a TrustedDWG last saved by an Autodesk application or Autodesk licensed<br>application.</p>
      <p>Command:</p>
      <p>Command:</p>
    </div>
    <div class="cmdline">
      <i class="grip"></i>
      <button class="cx" aria-label="Close command line"><svg viewBox="0 0 12 12"><path d="M2 2l8 8M10 2l-8 8" stroke="#d0d0d0" stroke-width="2"/></svg></button>
      <button class="cx" aria-label="Customize command line"><svg viewBox="0 0 14 14"><path d="M2 1l3 3-1 2-3-2c-1 3 1 5 4 4l6 6 2-2-6-6c1-3-1-6-5-5z" fill="#d0d0d0"/></svg></button>
      <div class="entry">
        <button class="prompt" aria-label="Recent commands">&gt;_</button><i class="dn"></i>
        <input type="text" placeholder="Type a command" aria-label="Command">
        <i class="up"></i>
      </div>
    </div>
  </div>
</main>

<footer class="bottom">
  <nav class="layouts"><a href="#" class="active">Model</a><a href="#">Layout1</a><button aria-label="New layout">+</button></nav>
  <div class="status">
    <span class="coords">517932.27, 31238.25, 0.00</span>
    <button class="txt model">MODEL</button>
    <button aria-label="Grid"><svg><use href="#s-grid"/></svg></button>
    <button aria-label="Snap"><svg><use href="#s-snap"/></svg></button><button class="arrow" aria-label="Snap options"></button>
    <i class="gap"></i>
    <button aria-label="Infer"><svg><use href="#s-infer"/></svg></button>
    <button class="on" aria-label="Dynamic input"><svg><use href="#s-dyn"/></svg></button>
    <button class="on" aria-label="Ortho"><svg><use href="#s-ortho"/></svg></button>
    <button aria-label="Polar"><svg><use href="#s-polar"/></svg></button><button class="arrow" aria-label="Polar options"></button>
    <button aria-label="Isodraft"><svg><use href="#s-iso"/></svg></button><button class="arrow" aria-label="Isodraft options"></button>
    <button class="on" aria-label="Object snap tracking"><svg><use href="#s-otrack"/></svg></button>
    <button class="on" aria-label="Object snap"><svg><use href="#s-osnap"/></svg></button><button class="arrow" aria-label="Snap modes"></button>
    <button aria-label="Lineweight"><svg><use href="#s-lwt"/></svg></button>
    <button class="on" aria-label="Transparency"><svg><use href="#s-trans"/></svg></button>
    <button aria-label="Selection cycling"><svg><use href="#s-cycle"/></svg></button>
    <button aria-label="3D snap"><svg><use href="#s-cube"/></svg></button><button class="arrow" aria-label="3D snap options"></button>
    <i class="gap"></i>
    <button class="on" aria-label="Dynamic UCS"><svg><use href="#s-ucs"/></svg></button>
    <button aria-label="Selection filter"><svg><use href="#s-filt"/></svg></button><button class="arrow" aria-label="Filter options"></button>
    <button class="on" aria-label="Gizmo"><svg><use href="#s-gizmo"/></svg></button><button class="arrow" aria-label="Gizmo options"></button>
    <i class="gap"></i>
    <button class="on" aria-label="Annotation visibility"><svg><use href="#s-anno"/></svg></button>
    <button aria-label="Auto scale"><svg><use href="#s-auto"/></svg></button>
    <button aria-label="Annotation scale"><svg><use href="#s-scale"/></svg></button>
    <button class="txt pick">1:1 / 100%<i class="tri"></i></button>
    <button aria-label="Workspace"><svg><use href="#s-gear"/></svg></button><button class="arrow" aria-label="Workspace options"></button>
    <button aria-label="Annotation monitor"><svg><use href="#s-plus"/></svg></button>
    <i class="gap"></i>
    <button aria-label="Units"><svg><use href="#s-ruler"/></svg></button>
    <button class="txt pick">Decimal<i class="tri"></i></button>
    <button aria-label="Quick properties"><svg><use href="#s-quick"/></svg></button>
    <i class="gap"></i>
    <button aria-label="Lock UI"><svg><use href="#s-lockui"/></svg></button><button class="arrow" aria-label="Lock options"></button>
    <button aria-label="Isolate objects"><svg><use href="#s-isol"/></svg></button>
    <button class="on" aria-label="Hardware acceleration"><svg><use href="#s-hw"/></svg></button>
    <i class="gap"></i>
    <button aria-label="Drawing status"><svg><use href="#s-cad"/></svg></button>
    <button aria-label="Clean screen"><svg><use href="#s-full"/></svg></button>
    <button aria-label="Customization"><svg><use href="#s-menu"/></svg></button>
  </div>
</footer>
</div>
</body>
</html>
```
FILE: styles.css
```css
* { box-sizing: border-box; }
body { margin: 0; font: 11px/14px "Open Sans", "Noto Sans", sans-serif; color: #f0f0f0; background: #353535; }
button { font: inherit; color: inherit; background: none; border: 0; padding: 0; margin: 0; display: flex; align-items: center; justify-content: center; flex: none; white-space: nowrap; }
a { color: inherit; text-decoration: none; }
svg { display: block; flex: none; }
p, h1 { margin: 0; font: inherit; }
.defs { position: absolute; width: 0; height: 0; }
.app { display: flex; flex-direction: column; min-height: 100vh; }

.w { fill: none; stroke: #e2e2e2; }
.ww { fill: none; stroke: #fff; stroke-width: 1.5; }
.b { fill: none; stroke: #79bdf0; }
.f-blue { fill: #79bdf0; }
.f-white { fill: #fff; }
.f-grey { fill: #d9dbdb; }
.f-gold { fill: #fdc77b; }

.arrow { width: 16px; height: 100%; }
.arrow::before, .dn, .tri { content: ""; border: 4px solid transparent; border-top-color: #eee; border-bottom: 0; flex: none; }
.dn { border-width: 3px 3px 0; }
.tri { border-width: 5px 5px 0; border-top-color: #f4f4f4; }

/* Title bar */
.titlebar { display: flex; height: 25px; background: #5f2115; border-bottom: 1px solid #2c2f31; position: relative; z-index: 1; }
.app-menu { width: 41px; height: 41px; border: 1px solid #150505; background: linear-gradient(#cfcfcf, #7c7c7c 60%, #a5a5a5); }
.app-menu svg { width: 39px; height: 39px; }
.qat { display: flex; align-items: center; width: 310px; flex: none; padding-left: 5px; background: #9c9d9e; border-bottom: 1px solid #b4b4b4; }
.qat button { width: 24px; height: 100%; }
.qat svg { width: 18px; height: 18px; }
.qat .arrow { width: 12px; }
.qat .over { width: 16px; flex-direction: column; gap: 2px; }
.over::before { content: ""; width: 8px; height: 2px; background: #fff; }
.over::after { content: ""; border: 4px solid transparent; border-top-color: #fff; border-bottom: 0; }
.title { flex: 1; display: flex; justify-content: center; gap: 12px; line-height: 23px; color: #170806; white-space: nowrap; }
.infobar { display: flex; align-items: center; width: 447px; flex: none; background: #9c9d9e; border-bottom: 1px solid #b4b4b4; }
.infobar svg { width: 18px; height: 18px; }
.right-arrow { width: 14px; }
.right-arrow::before { content: ""; border: 4px solid transparent; border-left: 5px solid #fff; border-right: 0; }
.infobar input { width: 180px; height: 22px; flex: none; padding: 0 3px; font: italic 11px "Open Sans", sans-serif; color: #eee; background: #727476; border: 1px solid #3e4145; border-bottom-color: #ddd; }
.infobar input::placeholder { color: #e0e0e0; opacity: 1; }
.ib { width: 24px; }
.signin { gap: 4px; width: 106px; padding-left: 3px; justify-content: flex-start; color: #fff; }
.infobar .arrow { width: 12px; }
.cart { margin-left: 3px; }
.help { margin-left: 11px; }
.winbtns { display: flex; width: 162px; flex: none; padding: 0 2px 0 25px; }
.winbtns button { width: 45px; }
.winbtns svg { width: 12px; height: 12px; fill: none; stroke: #fff; }

/* Ribbon tabs */
.ribbon-tabs { display: flex; align-items: flex-end; height: 20px; padding-left: 46px; background: #525252; color: #d4d4d4; }
.ribbon-tabs a { padding: 0 11px; height: 18px; line-height: 16px; }
.ribbon-tabs .active { padding: 0 9px; line-height: 14px; color: #fff; background: linear-gradient(#707070, #5b5b5b); border: 1px solid #2f3133; border-bottom: 0; border-radius: 2px 2px 0 0; }
.min-ribbon { width: 14px; height: 8px; margin: 0 0 6px 20px; background: #f0f0f0; border-radius: 2px; }
.min-ribbon::before { content: ""; border: 3px solid transparent; border-bottom-color: #333; border-top: 0; }
.ribbon-tabs .arrow { height: 20px; }
.ribbon-tabs .arrow::before, .infobar .arrow::before, .qat .arrow::before { border-width: 3px 3px 0; }

/* Ribbon */
.ribbon { display: flex; height: 99px; border-top: 1px solid #2c2f31; border-bottom: 1px solid #77797a; padding: 0 0 1px 1px; background: linear-gradient(#505457, #3a3a3a); }
.panel { flex: none; display: flex; flex-direction: column; background: #5b5b5b; border-right: 1px solid #37393b; border-left: 1px solid #6a6a6a; }
.body { flex: 1; display: flex; padding: 3px 2px 0; }
.ptitle { height: 18px; display: flex; align-items: center; justify-content: center; gap: 6px; position: relative; background: linear-gradient(#454748, #505254); }
.launch { width: 6px; height: 6px; border: solid #ddd; border-width: 0 1px 1px 0; background: linear-gradient(to top right, transparent 42%, #ddd 42% 58%, transparent 58%); }
.p-props .launch { position: absolute; right: 3px; }
.p-draw { width: 225px; } .p-modify { width: 250px; } .p-anno { width: 195px; } .p-layers { width: 273px; } .p-block { width: 160px; }
.p-props { width: 266px; } .p-groups { width: 69px; } .p-utils { width: 97px; } .p-clip { width: 80px; } .p-view { width: 62px; }
.p-block .body, .p-groups .body { padding-left: 0; padding-right: 0; }
.big { flex-direction: column; justify-content: flex-start; line-height: 15px; white-space: normal; }
.big svg { width: 36px; height: 36px; margin-bottom: 2px; }
.big .dn { margin-top: 3px; }
.w38 { width: 38px; } .w42 { width: 42px; } .w48 { width: 48px; } .w52 { width: 52px; } .w58 { width: 58px; } .w64 { width: 64px; }
.bigA { height: 38px; font: 500 38px/34px Roboto, "Open Sans", sans-serif; color: #dcdede; }
.col { display: flex; flex-direction: column; }
.col button, .row button { height: 24px; gap: 5px; justify-content: flex-start; padding: 0 4px; }
.col svg, .row svg, .prow svg, .layer svg { width: 16px; height: 16px; }
.w72 { width: 72px; } .w69 { width: 69px; } .w75 { width: 75px; }
.p-modify .col .dn, .p-anno .col .dn, .p-block .col .dn { margin-left: 6px; }
.col .on { background: linear-gradient(#4d7fc0, #3c62a0); border: 1px solid #223; padding: 0 3px; }
.stack { flex: 1; display: flex; flex-direction: column; }
.row { display: flex; height: 24px; }
.combo { height: 22px; width: 100%; flex: 1; justify-content: flex-start; padding: 0 2px 0 6px; gap: 6px; background: linear-gradient(#606366, #4a4d50); border: 1px solid #2b2e33; }
.combo > .tri { margin-left: auto; }
.layer { flex: none; margin-bottom: 2px; gap: 4px; }
.sw { width: 16px; height: 16px; background: #babbbc; }
.outlined { border: 1px solid #000; width: 14px; height: 14px; margin: 0 2px; }
.rule { width: 64px; height: 1px; background: #fff; }
.combo .rule { margin: 0 -4px 0 -3px; }
.color { padding-left: 12px; gap: 10px; }
.prow { display: flex; align-items: center; gap: 2px; height: 22px; padding: 0 1px 0 4px; margin-bottom: 2px; }

/* File tabs */
.file-tabs { display: flex; height: 29px; padding: 3px 0 0 20px; background: linear-gradient(#333 25px, #5a5a5a 25px); overflow: hidden; flex: none; color: #b9bbbd; }
.file-tabs a { position: relative; flex: none; display: flex; align-items: center; height: 23px; padding: 0 12px 0 10px; z-index: 0; white-space: nowrap; }
.file-tabs a::before, .file-tabs a::after { content: ""; position: absolute; z-index: -1; top: 0; bottom: 0; background: linear-gradient(#5c5e60, #4b4b4b); border-top: 1px solid #6b6d6f; }
.file-tabs a::before { left: 0; right: 30%; transform: skewX(-16deg); border-radius: 7px 0 0 0; border-left: 1px solid #6b6d6f; }
.file-tabs a::after { right: 0; left: 30%; transform: skewX(16deg); border-radius: 0 7px 0 0; border-right: 1px solid #6b6d6f; }
.file-tabs i { margin-left: auto; font: 10px/14px "DejaVu Sans", sans-serif; color: #2f3133; }
.file-tabs .active { color: #fff; }
.file-tabs .active::before, .file-tabs .active::after { background: linear-gradient(#7a7d80, #5a5c5e); }
.t-start { width: 126px; } .t-l { width: 158px; } .t-xl { width: 270px; } .t-s { width: 123px; } .t-m { width: 152px; }
.t-n { width: 139px; } .t-w { width: 160px; }
.file-tabs .t-new { flex: 1; min-width: 0; height: 18px; margin: 2px 0 0 4px; background: #555; border-radius: 0 0 0 8px; font-size: 13px; }

/* Drawing area */
.canvas { position: relative; flex: 1; min-height: 400px; background: #212830; border-right: 7px solid #d9e4f6; }
.drawing { position: absolute; top: 0; left: 0; width: 100%; height: 100%; }
.ln { fill: none; stroke: #e0e3e3; }
.ln path, .ln circle, path.ln, #tower path, #win path, #winhalf path { vector-effect: non-scaling-stroke; }
.ln .bright, .ln.bright { stroke: #f4f4f4; }
.ln .dim { stroke: #85888a; }
.ln .chain { stroke-dasharray: 9 4 1 4; stroke: #f4f4f4; }
.solid { fill: #fff; stroke: none; }
.ucs { font: 300 18px "Open Sans", sans-serif; fill: #fff; }
.vp-label { position: absolute; left: 3px; top: 7px; font-size: 12px; }
.mdi { position: absolute; right: 10px; top: 9px; display: flex; gap: 8px; }
.mdi svg { width: 12px; height: 12px; fill: #f4f4f4; }
.cube { position: absolute; right: 23px; top: 46px; width: 120px; height: 120px; border: 14px solid #4a4b4c; border-radius: 50%; display: grid; place-items: center; font: bold 22px/20px "Liberation Sans", Arial, sans-serif; color: #adafb0; }
.cube span { position: absolute; }
.cube .north { top: -19px; } .cube .south { bottom: -20px; } .cube .west { left: -21px; } .cube .east { right: -18px; }
.face { width: 52px; height: 52px; background: #aab0b0; border: 1px solid #888c8c; }
.face b { width: 32px; line-height: 32px; background: #a0a2a3; color: #4a4d50; font-size: 12px; }
.wcs { position: absolute; right: 59px; top: 193px; width: 48px; height: 18px; gap: 5px; color: #55585a; background: #989b9c; border: 1px solid #77797a; border-radius: 4px; }
.wcs svg { width: 10px; height: 6px; fill: none; stroke: #b8babb; }
.navbar { position: absolute; right: 4px; top: 236px; width: 32px; background: #5c5e5f; border-radius: 4px; box-shadow: 0 0 0 1px #45484a; }

.command { position: absolute; left: 7px; right: 0; bottom: 1px; margin: auto; width: 770px; font: 12px/15px "Liberation Mono", monospace; }
.history { display: flex; flex-direction: column; align-items: flex-start; gap: 5px; margin: 0 0 3px 60px; }
.history p { padding: 0 2px; background: rgba(96, 97, 97, .85); border-radius: 2px; color: #e2e2e2; white-space: nowrap; }
.history p:first-child { color: #c0c3c3; }
.cmdline { display: flex; align-items: center; height: 25px; padding-left: 4px; background: linear-gradient(#747678, #3e4042); border-radius: 2px; }
.grip { width: 5px; height: 18px; background: repeating-linear-gradient(#999 0 1px, transparent 1px 3px); }
.cx { width: 22px; height: 100%; }
.cx svg { width: 14px; height: 14px; }
.entry { flex: 1; display: flex; align-items: center; align-self: stretch; margin-left: 1px; padding: 0 5px 0 4px; background: #bcbdbe; border: 1px solid #ccc; }
.prompt { width: 15px; height: 14px; border: 1px solid #666; background: #999; color: #222; font-size: 8px; }
.entry .dn { border-top-color: #555; margin: 0 7px 0 4px; }
.entry input { flex: 1; font: italic 12px "Liberation Mono", monospace; color: #222; background: none; border: 0; padding: 0; }
.entry input::placeholder { color: #6a6c6e; opacity: 1; }
.up { border: 4px solid transparent; border-bottom: 5px solid #222; border-top: 0; }

/* Bottom bar */
.bottom { display: flex; justify-content: space-between; height: 23px; background: #373737; border-top: 1px solid #55565c; flex: none; }
.layouts { display: flex; height: 18px; padding-left: 14px; color: #b4b6ba; }
.layouts a { padding: 0 9px; line-height: 16px; background: #505254; border-radius: 0 0 8px 8px; margin-right: 4px; }
.layouts .active { background: linear-gradient(#55585a, #85898b); color: #fff; font-weight: 700; }
.layouts button { width: 22px; margin-left: 3px; background: #4c4e4e; border-radius: 8px 0 8px 0; font-size: 15px; color: #ccc; }
.status { display: flex; align-items: center; background: #4d4f4f; border-top: 1px solid #66686a; font-size: 11px; color: #fff; }
.status button { width: 24px; height: 22px; }
.status .arrow { width: 16px; }
.status svg { width: 16px; height: 16px; }
.status .on { background: #5f91c5 content-box; padding: 0 1px; }
.status .txt { border: solid #6f7172; border-width: 0 1px; gap: 5px; }
.status .pick { width: 75px; border-width: 0 1px 0 0; }
.status .model { width: 51px; font-size: 12px; }
.status .pick .tri { border-width: 4px 4px 0; }
.coords { padding-right: 5px; width: 182px; text-align: right; border-left: 1px solid #77797a; font-size: 12px; white-space: nowrap; }
.gap { width: 4px; height: 20px; border-left: 1px solid #77797a; }
```
